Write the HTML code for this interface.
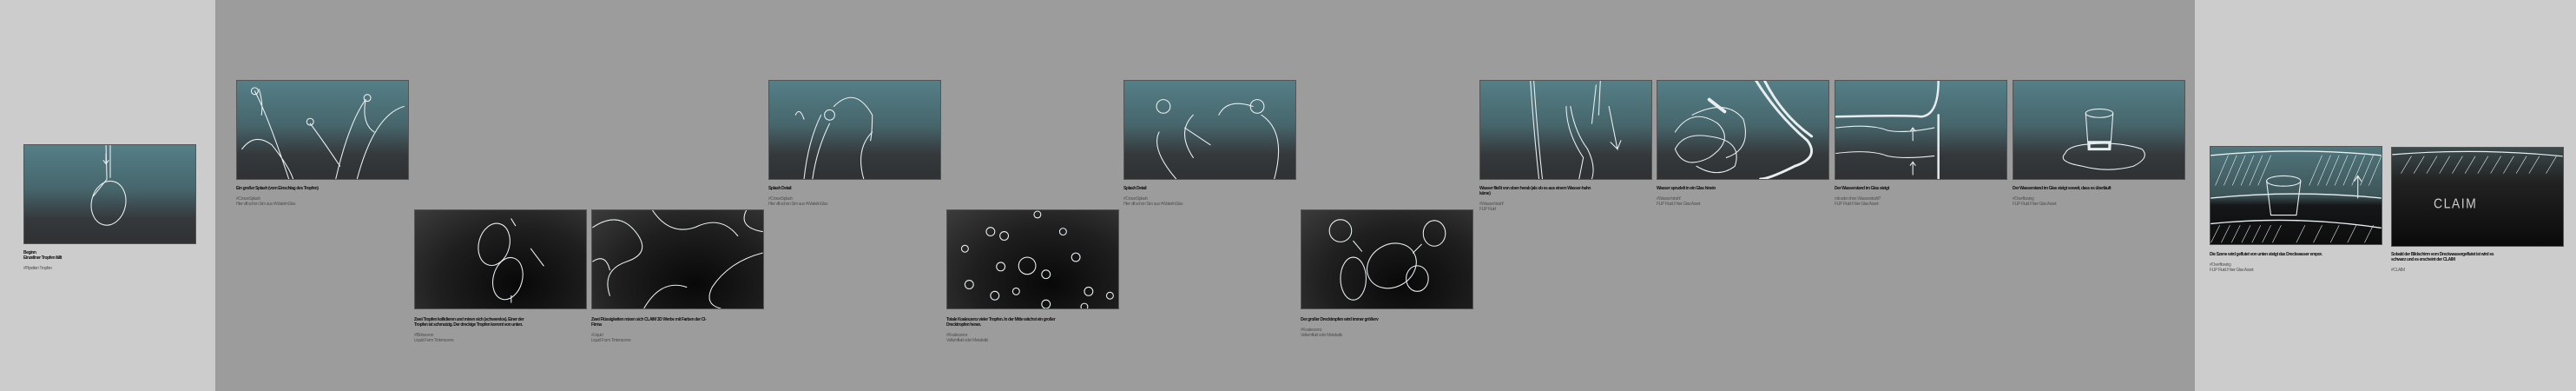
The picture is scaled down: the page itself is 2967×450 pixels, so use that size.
<!DOCTYPE html>
<html><head><meta charset="utf-8"><style>
*{margin:0;padding:0;box-sizing:border-box}
body{width:2967px;height:450px;overflow:hidden;background:#9c9c9c;position:relative;font-family:"Liberation Sans",sans-serif}
.lp{position:absolute;left:0;top:0;width:248px;height:450px;background:#cccccc}
.rp{position:absolute;left:2528px;top:0;width:439px;height:450px;background:#cccccc}
.f{position:absolute;width:199px;height:115px;border:1px solid #555;overflow:hidden}
.t{background:linear-gradient(180deg,#557f87 0%,#46666c 45%,#35393c 75%,#2f3133 100%)}
.d{background:radial-gradient(ellipse at 60% 75%,#080808 0%,#1f1f1f 55%,#3c3c3c 100%)}
.f svg{width:100%;height:100%;display:block}
.f svg *{fill:none;stroke:#e8eef0;stroke-width:1.1;stroke-linecap:round}
.c{position:absolute;width:135px;font-size:5px;line-height:6px;color:#111;font-weight:bold;letter-spacing:-0.4px}
.c p{font-weight:normal;color:#555;margin-top:6px}
</style></head><body>
<div class="lp"></div><div class="rp"></div>

<div class="f t" style="left:27px;top:166px"><svg viewBox="0 0 199 115"><path d="M95 0 L96 40 Q88 50 80 60 M100 0 L100 38"/><ellipse cx="98" cy="68" rx="20" ry="26" transform="rotate(12 98 68)"/><path d="M95 10 l0 12 m-3 -4 l3 4 3 -4"/></svg></div>
<div class="c" style="left:27px;top:288px">Beginn<br>Einzellner Tropfen fällt<p>#Pipetten Tropfen</p></div>

<div class="f t" style="left:272px;top:92px"><svg viewBox="0 0 199 115"><path d="M20 12 Q35 40 60 115 M25 10 Q30 25 28 40 M5 80 Q20 60 40 75 Q60 100 65 115 M85 50 Q100 70 120 100 M150 22 Q130 50 115 115 M195 30 Q160 40 140 115 M150 22 Q145 50 160 60"/><circle cx="20" cy="12" r="4"/><circle cx="152" cy="20" r="4"/><circle cx="85" cy="48" r="4"/></svg></div>
<div class="c" style="left:272px;top:214px">Ein großer Splash (vom Einschlag des Tropfen)<p>#CrownSplash<br>Hier vllt schon Sim aus #WaterInGlas</p></div>

<div class="f d" style="left:477px;top:241px"><svg viewBox="0 0 199 115"><ellipse cx="92" cy="40" rx="18" ry="25" transform="rotate(15 92 40)"/><ellipse cx="108" cy="80" rx="17" ry="25" transform="rotate(15 108 80)"/><path d="M135 45 l15 20 M112 10 l5 8 M112 108 l0 -8"/></svg></div>
<div class="c" style="left:477px;top:365px">Zwei Tropfen kollidieren und mixen sich (schwerelos). Einer der Tropfen ist schmutzig. Der dreckige Tropfen kommt von unten.<p>#Blobscene<br>Liquid Form Tintenscene</p></div>

<div class="f d" style="left:681px;top:241px"><svg viewBox="0 0 199 115"><path d="M0 20 Q30 0 50 25 Q70 50 40 60 Q10 70 20 100 M70 0 Q90 30 120 20 Q150 5 170 30 M199 50 Q160 60 140 90 Q130 110 150 115 M60 115 Q80 80 110 90 M180 0 Q170 20 199 25 M0 60 Q15 50 20 70"/></svg></div>
<div class="c" style="left:681px;top:365px">Zwei Flüssigkeiten mixen sich CLAIM 3D Werbe mit Farben der CI-Firma<p>#Liquid<br>Liquid Form Tintenscene</p></div>

<div class="f t" style="left:885px;top:92px"><svg viewBox="0 0 199 115"><path d="M40 115 Q45 70 60 40 M50 115 Q55 80 70 50 M75 30 Q100 5 120 40 Q120 60 118 70 M110 115 Q100 80 120 60 M30 40 Q35 30 40 45"/><circle cx="70" cy="40" r="6"/></svg></div>
<div class="c" style="left:885px;top:214px">Splash Detail<p>#CrownSplash<br>Hier vllt schon Sim aus #WaterInGlas</p></div>

<div class="f d" style="left:1090px;top:241px"><svg viewBox="0 0 199 115"><circle cx="50" cy="25" r="5"/><circle cx="66" cy="30" r="5"/><circle cx="20" cy="45" r="4"/><circle cx="93" cy="65" r="10"/><circle cx="62" cy="66" r="5"/><circle cx="135" cy="25" r="4"/><circle cx="150" cy="55" r="5"/><circle cx="115" cy="75" r="5"/><circle cx="25" cy="87" r="5"/><circle cx="55" cy="100" r="5"/><circle cx="165" cy="95" r="5"/><circle cx="190" cy="100" r="4"/><circle cx="115" cy="110" r="5"/><circle cx="160" cy="113" r="4"/><circle cx="105" cy="5" r="4"/><circle cx="80" cy="95" r="4"/></svg></div>
<div class="c" style="left:1090px;top:365px">Totale Koaleszenz vieler Tropfen. In der Mitte wächst ein großer Drecktropfen heran.<p>#Koaleszenz<br>Vellumfluid oder Metaballs</p></div>

<div class="f t" style="left:1294px;top:92px"><svg viewBox="0 0 199 115"><path d="M40 60 Q30 80 60 115 M80 40 Q60 60 80 90 M160 40 Q190 60 175 115 M150 30 Q120 20 110 40 M70 55 l30 20"/><circle cx="45" cy="30" r="8"/><circle cx="155" cy="30" r="8"/></svg></div>
<div class="c" style="left:1294px;top:214px">Splash Detail<p>#CrownSplash<br>Hier vllt schon Sim aus #WaterInGlas</p></div>

<div class="f d" style="left:1498px;top:241px"><svg viewBox="0 0 199 115"><ellipse cx="45" cy="24" rx="13" ry="13"/><ellipse cx="155" cy="27" rx="13" ry="15"/><ellipse cx="105" cy="65" rx="30" ry="25" transform="rotate(-30 105 65)"/><ellipse cx="60" cy="80" rx="15" ry="25"/><ellipse cx="135" cy="80" rx="13" ry="15"/><path d="M60 36 l10 12 M140 40 l-10 10"/></svg></div>
<div class="c" style="left:1498px;top:365px">Der großer Drecktropfen wird immer größerv<p>#Koaleszenz<br>Vellumfluid oder Metaballs</p></div>

<div class="f t" style="left:1704px;top:92px"><svg viewBox="0 0 199 115"><path d="M58 0 Q62 60 68 115 M62 0 Q66 60 72 115 M105 30 Q110 60 125 80 Q135 100 130 115 M100 30 Q100 60 120 90 L115 115 M135 5 L130 50 M140 0 L138 40 M150 30 L160 80 l-8 -8 m8 8 l4 -10"/></svg></div>
<div class="c" style="left:1704px;top:214px">Wasser fließt von oben herab (als ob es aus einem Wasser-hahn käme)<p>#Wasser'strahl'<br>FLIP Fluid</p></div>

<div class="f t" style="left:1908px;top:92px"><svg viewBox="0 0 199 115"><path d="M115 0 Q140 40 175 70 Q190 90 160 100 Q130 115 120 115 M125 0 Q145 40 180 65" style="stroke-width:3"/><path d="M20 60 Q40 30 70 50 Q90 70 60 90 Q30 105 20 80 Q30 60 60 65 Q100 70 90 100 Q70 115 45 100 M40 40 Q80 20 100 45 Q110 80 80 90" /><path d="M60 22 l18 14" style="stroke-width:4"/></svg></div>
<div class="c" style="left:1908px;top:214px">Wasser sprudelt in ein Glas hinein<p>#Wasser'strahl'<br>FLIP Fluid // hier Glas Asset</p></div>

<div class="f t" style="left:2113px;top:92px"><svg viewBox="0 0 199 115"><path d="M0 42 Q80 40 100 42 Q120 40 120 0 M120 40 L120 115" style="stroke-width:2.5"/><path d="M0 55 Q40 50 60 58 Q80 62 115 55 M0 85 Q40 80 60 88 Q80 92 115 88 M90 70 l0 -15 m-3 4 l3 -4 3 4 M90 110 l0 -15 m-3 4 l3 -4 3 4"/></svg></div>
<div class="c" style="left:2113px;top:214px">Der Wasserstand im Glas steigt<p>mit oder ohne Wasserstrahl?<br>FLIP Fluid // hier Glas Asset</p></div>

<div class="f t" style="left:2318px;top:92px"><svg viewBox="0 0 199 115"><ellipse cx="100" cy="38" rx="16" ry="5"/><path d="M84 38 L87 80 L113 80 L116 38 M60 85 Q50 95 80 100 Q110 108 140 100 Q160 90 150 80 Q120 70 80 75 Q62 78 60 85"/><path d="M88 72 L112 72 L112 80 L88 80 Z" style="stroke-width:3"/></svg></div>
<div class="c" style="left:2318px;top:214px">Der Wasserstand im Glas steigt soweit, dass es überläuft<p>#Overflowing<br>FLIP Fluid // hier Glas Asset</p></div>

<div class="f t" style="left:2545px;top:168px;height:114px;background:linear-gradient(180deg,#4f767c 0%,#3e5559 50%,#151718 60%,#0d0d0d 100%)"><svg viewBox="0 0 199 114"><path d="M0 10 Q100 0 199 10 M0 60 Q100 50 199 60 M0 90 Q100 80 199 95" style="stroke-width:1.4"/><path d="M5 45 l15 -35 M15 45 l15 -35 M25 45 l15 -35 M35 45 l15 -35 M45 45 l15 -35 M55 45 l15 -35 M115 45 l15 -35 M125 45 l15 -35 M135 45 l15 -35 M145 45 l15 -35 M155 45 l15 -35 M165 45 l15 -35 M175 45 l15 -35 M185 45 l15 -35 M0 112 l10 -20 M12 112 l10 -20 M24 112 l10 -20 M36 112 l10 -20 M48 112 l10 -20 M60 112 l10 -20 M72 112 l10 -20 M100 112 l10 -20 M120 112 l10 -20 M140 112 l10 -20 M160 112 l10 -20 M180 112 l10 -20" style="stroke-width:0.6"/><ellipse cx="85" cy="40" rx="20" ry="6"/><path d="M65 40 L70 80 L100 80 L105 40 M172 60 l0 -25 M168 40 l4 -6 4 6"/></svg></div>
<div class="c" style="left:2545px;top:290px">Die Szene wird geflutet von unten steigt das Dreckwasser empor.<p>#Overflowing<br>FLIP Fluid // hier Glas Asset</p></div>

<div class="f" style="left:2754px;top:169px;height:115px;background:linear-gradient(180deg,#3c4a4c 0%,#222 35%,#0a0a0a 100%)"><svg viewBox="0 0 199 115"><path d="M0 8 Q100 0 199 10" style="stroke-width:1.2"/><path d="M10 30 l12 -20 M25 30 l12 -20 M40 30 l12 -20 M55 30 l12 -20 M70 30 l12 -20 M85 30 l12 -20 M100 30 l12 -20 M115 30 l12 -20 M130 30 l12 -20 M145 30 l12 -20 M160 30 l12 -20 M180 30 l12 -20" style="stroke-width:0.6"/></svg><div style="position:absolute;left:48px;top:56px;color:#ccc;font-size:14px;font-weight:normal;letter-spacing:1.5px;font-family:'Liberation Sans',sans-serif;transform:scaleY(1.1)">CLAIM</div></div>
<div class="c" style="left:2754px;top:290px">Sobald der Bildschirm vom Dreckwassergeflutet ist wird es schwarz und es erscheint der CLAIM<p>#CLAIM</p></div>
</body></html>
